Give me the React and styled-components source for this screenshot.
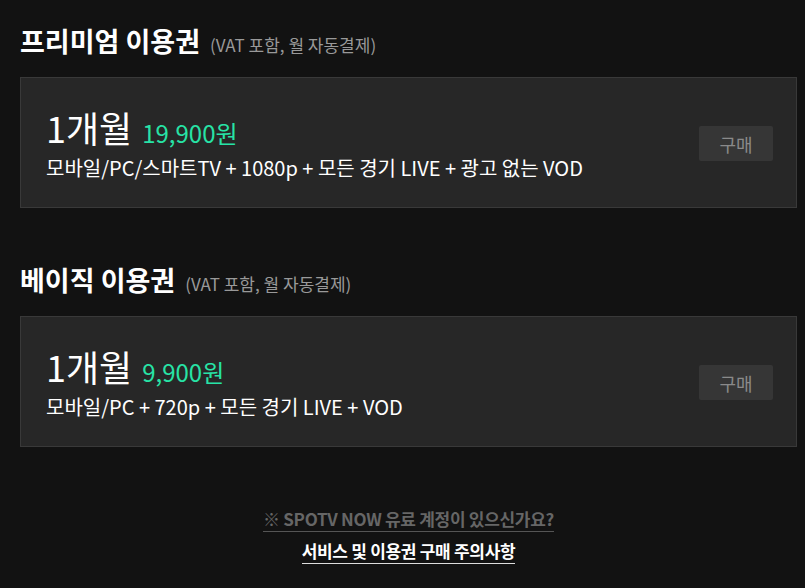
import React from 'react'
import styled, { createGlobalStyle } from 'styled-components'

const plans = [
  {
    name: '프리미엄 이용권',
    price: '19,900원',
    desc: '모바일/PC/스마트TV + 1080p + 모든 경기 LIVE + 광고 없는 VOD',
  },
  {
    name: '베이직 이용권',
    price: '9,900원',
    desc: '모바일/PC + 720p + 모든 경기 LIVE + VOD',
  },
]

export default function App() {
  return (
    <>
      <GlobalStyle />
      <Page>
        {plans.map((plan) => (
          <Plan key={plan.name}>
            <Heading>
              {plan.name}
              <Note>(VAT 포함, 월 자동결제)</Note>
            </Heading>
            <Card>
              <Info>
                <Period>
                  1개월
                  <Price>{plan.price}</Price>
                </Period>
                <Desc>{plan.desc}</Desc>
              </Info>
              <BuyButton type="button">구매</BuyButton>
            </Card>
          </Plan>
        ))}
        <Footer>
          <FooterLink href="#" $muted>
            ※ SPOTV NOW 유료 계정이 있으신가요?
          </FooterLink>
          <FooterLink href="#">서비스 및 이용권 구매 주의사항</FooterLink>
        </Footer>
      </Page>
    </>
  )
}

// --- STYLES
const GlobalStyle = createGlobalStyle`
  html, body {
    margin: 0;
    background: #121212;
  }
  body {
    font-family: "Noto Sans CJK KR", "Noto Sans", sans-serif;
    color: #fff;
  }
`

const Page = styled.div`
  width: 777px;
  padding: 21px 8px 20px 20px;
  display: flex;
  flex-direction: column;
  gap: 52px;
`

const Plan = styled.section`
  display: flex;
  flex-direction: column;
  gap: 12px;
`

const Heading = styled.h2`
  margin: 0;
  font-size: 27px;
  font-weight: 700;
  line-height: 40px;
  color: #fff;
`

const Note = styled.span`
  margin-left: 10px;
  font-size: 17px;
  font-weight: 400;
  color: #999;
`

const Card = styled.div`
  height: 131px;
  box-sizing: border-box;
  display: flex;
  align-items: center;
  justify-content: space-between;
  padding: 2px 23px 0 25px;
  background: #272727;
  border: 1px solid #393939;
`

const Info = styled.div`
  display: flex;
  flex-direction: column;
`

const Period = styled.div`
  font-size: 36px;
  line-height: 42px;
  font-weight: 400;
  color: #fff;
`

const Price = styled.span`
  margin-left: 10px;
  font-size: 24px;
  color: #27e3a6;
`

const Desc = styled.div`
  font-size: 20px;
  line-height: 28px;
  color: #fff;
`

const BuyButton = styled.button`
  width: 74px;
  height: 35px;
  border: 0;
  border-radius: 2px;
  background: #363636;
  color: #8a8a8a;
  font-family: inherit;
  font-size: 18px;
  cursor: pointer;
`

const Footer = styled.nav`
  display: flex;
  flex-direction: column;
  align-items: center;
  gap: 7px;
  margin-top: 8px;
`

const FooterLink = styled.a`
  font-size: 17px;
  font-weight: 700;
  line-height: 24px;
  color: ${(p) => (p.$muted ? '#666' : '#fff')};
  text-decoration: none;
  border-bottom: 1px solid ${(p) => (p.$muted ? '#555' : '#ddd')};
  letter-spacing: -0.3px;
`
